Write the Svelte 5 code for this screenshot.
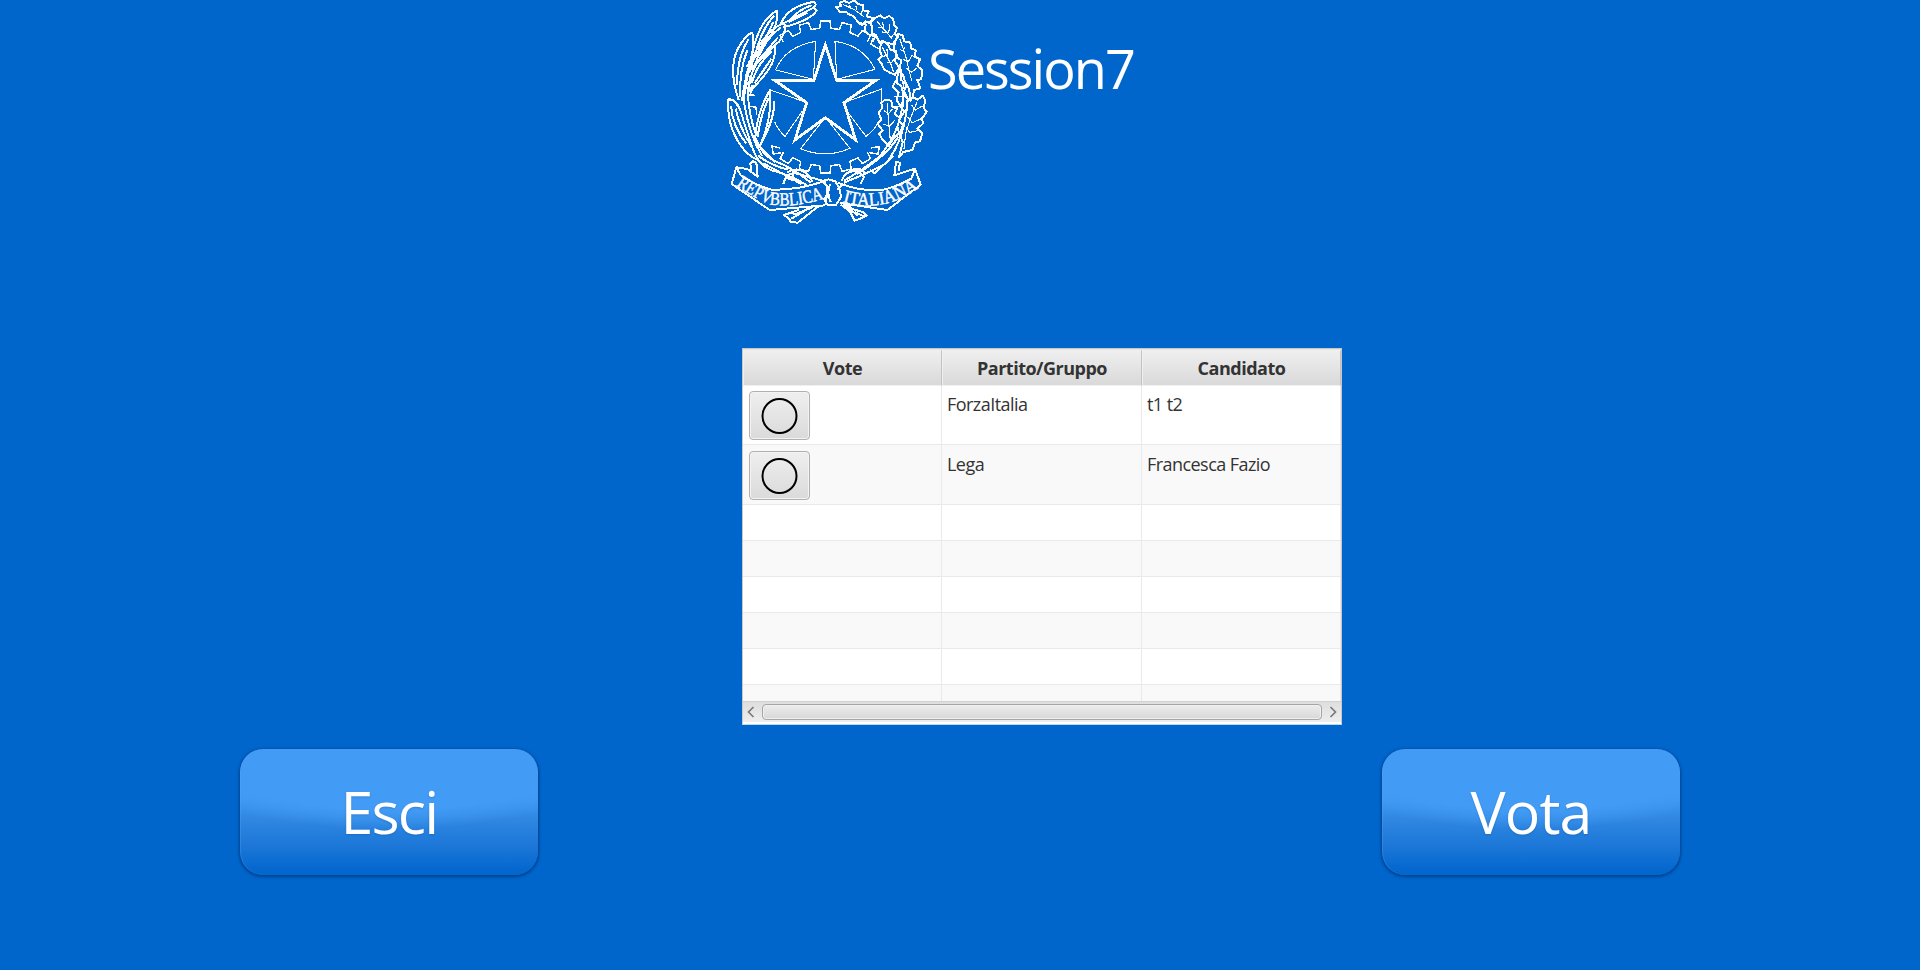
<script>
  const columns = ['Vote', 'Partito/Gruppo', 'Candidato'];
  const candidates = [
    { party: 'ForzaItalia', name: 't1 t2' },
    { party: 'Lega', name: 'Francesca Fazio' }
  ];
  const emptyRows = [0, 1, 2, 3, 4, 5];

  // Toothed wheel outline between two tooth indexes; index 0 is the top tooth.
  function gear(from, to) {
    const cx = 316, cy = 291, outer = 229, inner = 207, step = (Math.PI * 2) / 22;
    const at = (r, a) => `${(cx + r * Math.sin(a)).toFixed(1)} ${(cy - r * Math.cos(a)).toFixed(1)}`;
    const points = [];
    for (let i = from; i <= to; i++) {
      const a = i * step;
      points.push(at(inner, a - 0.08), at(outer, a - 0.062), at(outer, a + 0.062), at(inner, a + 0.08));
    }
    return 'M' + points.join('L');
  }
</script>

<main>
  <header>
    <svg class="emblem" viewBox="0 0 630 690" fill="none" stroke="#fff" stroke-width="4.5" stroke-linejoin="round">
      <defs>
        <path id="motto-left" d="M48 556Q100 594 152 614Q235 624 322 592" />
        <path id="motto-right" d="M368 606Q430 624 492 612Q545 600 602 560" />
      </defs>
      <path d={gear(-2, 2)} />
      <path d={gear(9, 13)} />
      <path d="M112 256L94 258L92 282M86 318L84 284L104 286M86 318L108 322L110 345M460 115L452 132L476 146M522 290L548 290L550 318L524 322M452 444L478 440L474 462L448 458M180 444L156 438L160 462L184 458" />
      <path stroke-width="8.5" stroke-linejoin="miter" d="M316 134L350 241L468 241L372 308L407 420L316 353L225 420L260 308L164 241L282 241Z" />
      <g stroke-width="3.2">
        <path d="M287 124L280 238L167 210Q195 140 287 124ZM345 124L350 238L465 208Q430 136 345 124Z" />
        <path d="M262 308L148 269L151 300M164 366Q174 390 195 409L246 335M372 308L485 267L485 305M474 368Q462 392 438 409L382 335" />
        <path d="M316 352L242 446Q316 478 390 445Z" />
      </g>

      <g stroke-width="6">
        <path d="M182 74Q200 20 283 5Q292 14 281 23L190 70M281 23L290 30Q280 58 190 82M212 60Q235 28 275 16M205 66L262 38" />
        <path d="M94 176Q112 65 170 32Q178 58 152 108L100 178M110 148Q130 80 162 48M122 146L160 66" />
        <path d="M90 190Q132 92 190 70Q206 82 178 124Q154 144 98 202M110 170Q148 105 184 82M118 178L174 112" />
        <path d="M56 300Q18 190 66 126Q82 102 97 98Q106 132 91 184Q73 242 66 302M51 254Q52 168 86 118M60 290Q58 210 82 150" />
        <path d="M84 276Q96 172 164 138Q173 188 112 250L90 276M96 248Q110 192 156 154M104 250L154 176" />
        <path d="M162 94Q76 178 72 306Q86 400 126 468M154 106Q94 184 84 280Q85 340 109 407M86 184L99 202L78 225L100 236L74 258L90 274M78 200L94 186" />
        <path d="M58 326Q43 294 25 298Q20 376 62 436Q82 466 114 480M25 298Q52 298 64 340Q76 382 101 454M33 318Q38 380 78 430M47 326Q58 382 94 438" />
        <path d="M149 272Q113 330 105 416L119 439Q158 354 149 272M146 294Q122 342 113 410M161 302Q168 348 122 434" />
        <path d="M105 411Q125 464 162 482Q220 504 272 548M99 448Q120 506 170 515Q217 528 264 558M118 438L166 486M114 466Q150 496 205 509M130 490L244 552" />
        <path d="M200 518Q234 496 265 525L278 546M190 552Q202 506 250 526L318 545M220 512L218 540L196 532" />
      </g>

      <g stroke-width="6">
        <path d="M360 8L372 3L388 9L403 1L414 12L430 16L429 31L446 34L440 49L459 54L449 69L436 64L426 76L413 65L400 48L385 42L379 35L361 36L348 22L363 18Z" />
        <path d="M464 55L481 46L492 55L508 48L520 58L522 76L531 84L524 102L535 110L518 132L500 129L487 122L479 128L467 105L455 99L457 82L450 68Z" />
        <path d="M535 102L549 107L552 124L571 128L573 145L588 151L583 169L600 178L592 198L606 210L604 238L592 240L601 265L583 270L577 292L566 300L552 274L560 254L543 239L542 210L525 184L530 164L521 148L526 124Z" />
        <path d="M483 130L493 126L504 133L512 151L528 152L530 171L544 181L539 202L525 224L510 218L492 208L485 192L475 178L486 168L479 151Z" />
        <path d="M533 210L549 225L556 247L567 266L572 302L550 284L544 259L532 250ZM561 302L580 292L592 299L608 287L616 302L611 323L620 336L607 354L608 372L592 386L607 399L600 424L585 428L577 450L550 456L537 472L548 426L538 402L549 376L536 362L553 335L560 329Z" />
        <path d="M484 309L495 299L514 302L517 319L531 326L524 342L540 354L532 380L537 399L518 419L507 437L486 416L478 402L488 392L473 371L484 360L476 337L486 325Z" />
        <path d="M416 68L438 73L433 91L445 103L466 110L457 126M528 240L518 260L536 278L530 300L550 332" />
        <path d="M548 282Q551 384 478 470Q434 506 372 542M563 300Q555 419 498 490Q445 519 372 548M535 410Q498 470 410 522M520 468L463 520L450 510" />
        <path d="M365 542Q378 508 416 514L432 531L422 551M382 520Q412 495 431 515L430 531" />
      </g>
      <path stroke-width="3.4" d="M370 14L403 29L432 50M389 15L391 25M408 17L409 31M427 33L421 44M471 64L516 116M488 66L490 82L474 82M510 72L506 98L486 96M521 103L514 112M540 118L556 165L575 242M553 140L550 154L540 148M577 164L566 184L548 178M591 204L574 217L557 203M487 142L512 191L520 215M501 148L502 166L489 169M526 174L514 188L500 187M591 306L574 348L557 400L552 446M607 318L586 330L575 316M604 356L577 368L562 350M593 392L569 397L559 382M502 310L505 356L511 422M517 328L505 341L492 332M525 360L508 379L491 372M548 244L554 275" />

      <g stroke-width="6">
        <path d="M94 514L91 490L99 484L109 488L113 530L82 507L49 502L35 552L149 630L316 616M49 502L62 526Q111 558 154 569Q232 571 312 544L324 565L316 616" />
        <path d="M536 512L540 488L528 486L523 526L585 506L602 554L502 630L360 609M585 506L574 536Q522 563 487 570Q418 575 354 548" />
        <path d="M306 543L325 538L346 544L358 564L363 591L348 615L324 616L313 598L322 580L321 559ZM330 552Q319 580 332 606M352 570L368 554" />
        <path d="M238 628L230 632L192 645L207 656L212 666L233 668L294 620M266 625L214 656M205 640L230 641L278 622M362 614L390 634L404 662L421 656L440 647L431 637L400 628L374 610M370 611L413 647M405 637L434 650" />
      </g>
      <g class="motto">
        <text><textPath href="#motto-left" textLength="282" lengthAdjust="spacingAndGlyphs">REPVBBLICA</textPath></text>
        <text><textPath href="#motto-right" textLength="240" lengthAdjust="spacingAndGlyphs">ITALIANA</textPath></text>
      </g>
    </svg>
    <h1>Session7</h1>
  </header>

  <section class="table">
    <div class="row head">
      {#each columns as column}
        <div class="th">{column}</div>
      {/each}
    </div>
    <div class="body">
      {#each candidates as c, i}
        <div class="row full" class:odd={i % 2 === 1}>
          <div class="cell pick">
            <button class="radio" aria-label={c.name}>
              <svg viewBox="0 0 38 38" width="38" height="38"><circle cx="18.5" cy="19" r="17" fill="none" stroke="#000" stroke-width="2" /></svg>
            </button>
          </div>
          <div class="cell">{c.party}</div>
          <div class="cell">{c.name}</div>
        </div>
      {/each}
      {#each emptyRows as i}
        <div class="row blank" class:odd={i % 2 === 1}>
          <div class="cell"></div>
          <div class="cell"></div>
          <div class="cell"></div>
        </div>
      {/each}
    </div>
    <div class="scroll">
      <svg viewBox="0 0 8 12" width="8" height="12"><path d="M6.5 1L1.5 6L6.5 11" /></svg>
      <div class="thumb"></div>
      <svg viewBox="0 0 8 12" width="8" height="12"><path d="M1.5 1L6.5 6L1.5 11" /></svg>
    </div>
  </section>

  <footer>
    <button class="action exit"><span>Esci</span></button>
    <button class="action vote"><span>Vota</span></button>
  </footer>
</main>

<style>
  :global(body) {
    margin: 0;
    background: #0066cc;
  }
  main {
    width: 1920px;
    height: 970px;
    overflow: hidden;
    background: #0066cc;
    font-family: "Open Sans", "Noto Sans", sans-serif;
    color: #fff;
  }
  header {
    display: flex;
    height: 348px;
    padding-left: 720px;
    box-sizing: border-box;
  }
  .emblem {
    width: 210px;
    height: 230px;
    flex: none;
    shape-rendering: crispEdges;
  }
  .motto {
    font: 56px "Liberation Serif", serif;
    fill: #fff;
    stroke: #fff;
    stroke-width: 1.4;
  }
  h1 {
    margin: 31px 0 0 -2px;
    font-size: 54px;
    font-weight: 400;
    line-height: 74px;
    letter-spacing: -1.95px;
  }
  .table {
    width: 600px;
    height: 377px;
    margin-left: 742px;
    box-sizing: border-box;
    border: 1px solid #c8c8c8;
    border-bottom-color: #b9dcf5;
    background: #fff;
    display: flex;
    flex-direction: column;
    overflow: hidden;
    color: #333;
  }
  .row {
    display: grid;
    grid-template-columns: 199px 200px 199px;
    box-sizing: border-box;
    background: #fff;
    flex: none;
  }
  .head {
    height: 37px;
    padding-top: 1px;
    background: #e6e6e6;
    border-bottom: 1px solid #bebebe;
  }
  .th {
    box-sizing: border-box;
    border: 1px solid #f0f0f0;
    border-right: 1px solid #c2c2c2;
    background: linear-gradient(#efefef, #d9d9d9);
    font-size: 18px;
    font-weight: 700;
    line-height: 34px;
    text-align: center;
    letter-spacing: -0.5px;
  }
  .body {
    height: 315px;
    overflow: hidden;
  }
  .row.odd {
    background: #f9f9f9;
  }
  .full {
    height: 59px;
  }
  .full.odd {
    height: 60px;
  }
  .blank {
    height: 36px;
  }
  .cell {
    box-sizing: border-box;
    border-right: 1px solid #e9e9e9;
    border-bottom: 1px solid #e9e9e9;
    padding: 6px 0 0 5px;
    font-size: 18px;
    line-height: 25px;
    letter-spacing: -0.55px;
  }
  .full.odd .cell {
    padding-top: 7px;
  }
  .cell.pick {
    padding: 5px 0 0 6px;
  }
  .full.odd .cell.pick {
    padding-top: 6px;
  }
  .radio {
    display: flex;
    align-items: center;
    justify-content: center;
    width: 61px;
    height: 49px;
    padding: 0;
    border: 1px solid #b0b0b0;
    border-radius: 4px;
    background: linear-gradient(#efefef, #dadada);
    box-shadow: inset 0 0 0 1px #f3f3f3;
  }
  .scroll {
    height: 21px;
    flex: none;
    display: flex;
    align-items: center;
    gap: 7px;
    padding: 0 4px;
    box-sizing: border-box;
    border-top: 1px solid #d2d2d2;
    background: linear-gradient(#dedede, #eeeeee);
  }
  .scroll path {
    fill: none;
    stroke: #777;
    stroke-width: 1.6;
  }
  .thumb {
    flex: 1;
    height: 16px;
    box-sizing: border-box;
    border: 1px solid #a6a6a6;
    border-radius: 4px;
    background: linear-gradient(#ededed, #d8d8d8);
    box-shadow: inset 0 0 0 1px #f0f0f0;
  }
  footer {
    display: flex;
    justify-content: space-between;
    padding: 24px 240px 0;
  }
  .action {
    width: 298px;
    height: 126px;
    padding: 0;
    border: 0;
    border-radius: 23px;
    background:
      radial-gradient(ellipse 260px 90px at 50% -10px, #429bf5 0 78%, rgba(66, 155, 245, 0) 100%),
      linear-gradient(#429bf5 0%, #3f98f1 38%, #2f87e1 56%, #1b76d7 78%, #0568cf 95%, #0066cc 100%);
    box-shadow: 0 1px 3px 1px rgba(0, 45, 110, 0.65), inset 1px 0 1px rgba(90, 170, 250, 0.3);
    color: #fff;
    font-family: inherit;
    font-size: 59px;
    line-height: 124px;
  }
  .action span {
    display: block;
    height: 126px;
    text-shadow: 0 1px 2px rgba(0, 60, 130, 0.25);
  }
  .exit {
    letter-spacing: -1.8px;
  }
  .vote {
    letter-spacing: -0.9px;
  }
</style>
